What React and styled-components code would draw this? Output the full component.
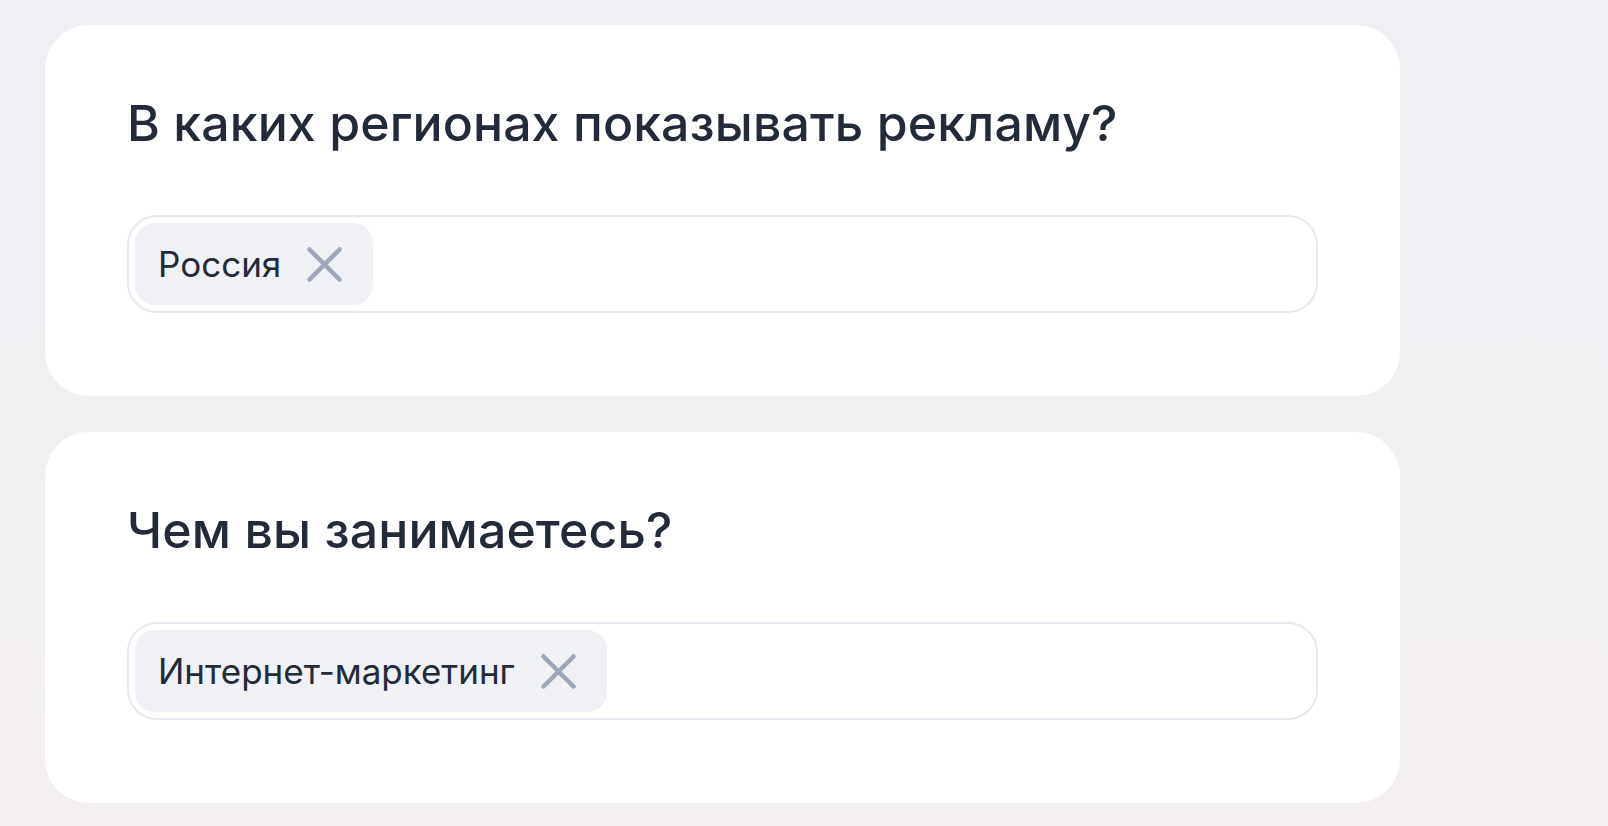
import React from 'react';
import styled, { createGlobalStyle } from 'styled-components';

const GlobalStyle = createGlobalStyle`
  html, body {
    margin: 0;
    padding: 0;
  }
  body {
    min-height: 100vh;
    background: linear-gradient(180deg, #efeff4 0%, #f4f0f1 100%);
    font-family: Inter, "Noto Sans", "Liberation Sans", sans-serif;
  }
`;

const Page = styled.div`
  display: flex;
  flex-direction: column;
  gap: 36px;
  padding: 25px 0 0 45px;
`;

const Card = styled.section`
  width: 1355px;
  box-sizing: border-box;
  padding: 68px 82px 83px;
  background: #ffffff;
  border-radius: 44px;
`;

const Title = styled.h2`
  margin: 0 0 62px;
  font-size: 50px;
  line-height: 60px;
  font-weight: 500;
  color: #232a3a;
  letter-spacing: 0.1px;
`;

const TagBox = styled.div`
  display: flex;
  align-items: center;
  gap: 8px;
  height: 98px;
  box-sizing: border-box;
  padding: 6px;
  border: 2px solid #e7e8ef;
  border-radius: 30px;
`;

const Chip = styled.div`
  display: flex;
  align-items: center;
  gap: 26px;
  height: 82px;
  box-sizing: border-box;
  padding: 0 31px 0 23px;
  background: #eff1f5;
  border-radius: 20px;
  font-size: 35px;
  color: #232a3a;
`;

const RemoveButton = styled.button`
  display: flex;
  padding: 0;
  border: none;
  background: none;
  cursor: pointer;
  color: #9ea6ba;
`;

const CloseIcon = () => (
  <svg width="35" height="35" viewBox="0 0 35 35" fill="none">
    <path d="M2.5 2.5L32.5 32.5M32.5 2.5L2.5 32.5" stroke="currentColor" strokeWidth="4.5" strokeLinecap="round" />
  </svg>
);

const questions = [
  { title: 'В каких регионах показывать рекламу?', tags: ['Россия'] },
  { title: 'Чем вы занимаетесь?', tags: ['Интернет-маркетинг'] },
];

const App = () => (
  <>
    <GlobalStyle />
    <Page>
      {questions.map((q) => (
        <Card key={q.title}>
          <Title>{q.title}</Title>
          <TagBox>
            {q.tags.map((tag) => (
              <Chip key={tag}>
                {tag}
                <RemoveButton aria-label="Удалить">
                  <CloseIcon />
                </RemoveButton>
              </Chip>
            ))}
          </TagBox>
        </Card>
      ))}
    </Page>
  </>
);

export default App;
